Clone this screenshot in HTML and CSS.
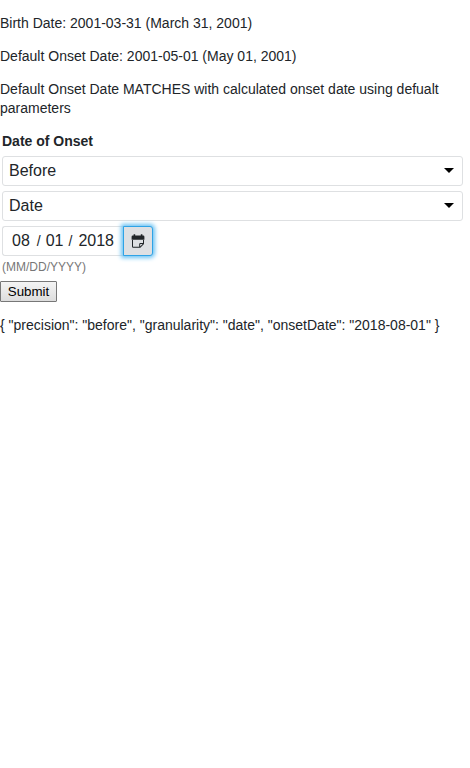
FILE: index.html
```html
<!DOCTYPE html>
<html lang="en">
<head>
<meta charset="utf-8">
<title>Date of Onset</title>
<link rel="stylesheet" href="styles.css">
</head>
<body>
<p>Birth Date: 2001-03-31 (March 31, 2001)</p>
<p>Default Onset Date: 2001-05-01 (May 01, 2001)</p>
<p>Default Onset Date MATCHES with calculated onset date using defualt parameters</p>
<form class="form">
  <div class="field">
    <div class="label">Date of Onset</div>
    <div class="select"><span>Before</span><svg class="caret" viewBox="0 0 10 5"><path d="M0 0H10L5 5Z"/></svg></div>
    <div class="select"><span>Date</span><svg class="caret" viewBox="0 0 10 5"><path d="M0 0H10L5 5Z"/></svg></div>
    <div class="date">
      <div class="parts"><span class="month">08</span><span class="slash">/</span><span class="day">01</span><span class="slash second">/</span><span class="year">2018</span></div>
      <button class="calendar" type="button" aria-label="Calendar">
        <svg viewBox="0 0 14 14"><path fill-rule="evenodd" d="M2.6 .3H4.2V1.6H9.8V.3H11.4V1.6H12.2Q13.4 1.6 13.4 2.8V5.7H.6V2.8Q.6 1.6 1.8 1.6H2.6ZM1 5.5H13V10L9.3 13.8H2.2Q1 13.8 1 12.6ZM2 5.5V12.2Q2 12.8 2.6 12.8H8.2V10.3Q8.2 9.1 9.4 9.1H12V5.5ZM9.2 10.1V12.5L11.6 10.1Z"/></svg>
      </button>
    </div>
    <div class="hint">(MM/DD/YYYY)</div>
  </div>
  <button class="submit" type="button">Submit</button>
</form>
<p>{ "precision": "before", "granularity": "date", "onsetDate": "2018-08-01" }</p>
</body>
</html>
```

FILE: styles.css
```css
* { box-sizing: border-box; }
body {
  margin: 0;
  background: #fff;
  color: #212529;
  font: 14px/19px "Liberation Sans", Arial, sans-serif;
}
p { margin: 14px 0; }
.field { padding: 0 7px 0 2px; }
.label { height: 24px; font-weight: 700; }
.select {
  display: flex;
  align-items: center;
  justify-content: space-between;
  height: 30px;
  margin-bottom: 5px;
  padding: 0 8px 1px 6px;
  border: 1px solid #dee0e2;
  border-radius: 3px;
  font-size: 16px;
  line-height: 18px;
}
.caret { width: 10px; height: 5px; fill: #000; }
.date { display: flex; height: 30px; }
.parts {
  display: flex;
  align-items: center;
  width: 121px;
  padding: 0 0 1px 9px;
  border: 1px solid #dee0e2;
  border-right: 0;
  border-radius: 3px 0 0 3px;
  font-size: 16px;
  line-height: 18px;
}
.slash { margin: 1px 5px 0 7px; font-size: 14px; }
.slash.second { margin: 1px 6px 0 5px; }
.calendar {
  display: flex;
  align-items: center;
  justify-content: center;
  width: 30px;
  height: 30px;
  padding: 0;
  border: 1px solid #2ea3e6;
  border-radius: 0 3px 3px 0;
  background: #dee0e3;
  box-shadow: 0 0 4px 2px #6bc2f3;
}
.calendar svg { width: 14px; height: 14px; fill: #212529; }
.hint { height: 25px; padding-top: 2px; color: #777; font-size: 12px; }
.submit {
  display: block;
  width: 57px;
  height: 21px;
  padding: 0;
  border: 1px solid #777;
  border-radius: 1px;
  background: linear-gradient(#f4f4f4, #ddd);
  color: #000;
  font: 13.333px "Liberation Sans", Arial, sans-serif;
}
```
